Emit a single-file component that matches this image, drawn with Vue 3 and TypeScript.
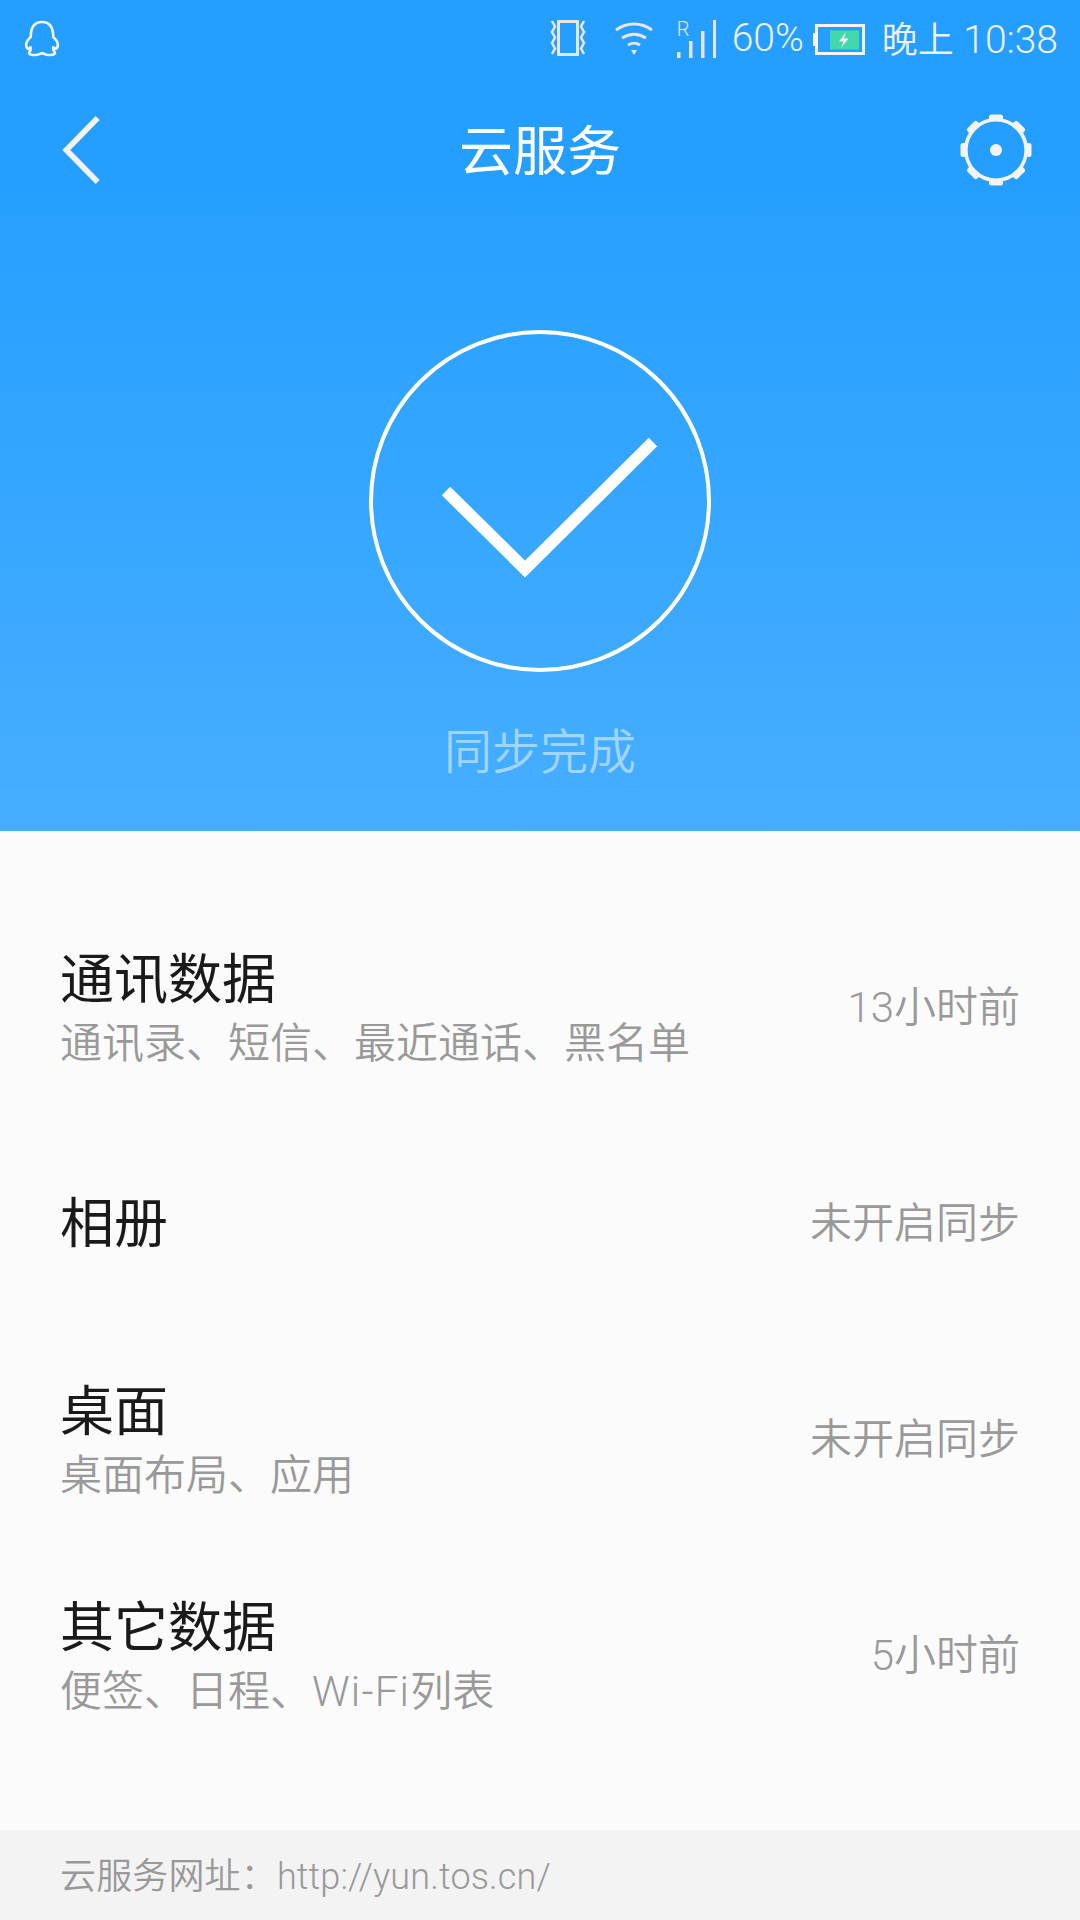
<script setup lang="ts">
interface SyncRow {
  title: string;
  detail?: string;
  // the latin word in a detail line runs wider than the rest, so it gets its own span
  latin?: string;
  tail?: string;
  status: string;
}

const rows: SyncRow[] = [
  { title: "通讯数据", detail: "通讯录、短信、最近通话、黑名单", status: "13小时前" },
  { title: "相册", status: "未开启同步" },
  { title: "桌面", detail: "桌面布局、应用", status: "未开启同步" },
  { title: "其它数据", detail: "便签、日程、", latin: "Wi-Fi", tail: "列表", status: "5小时前" },
];

const gearTeeth = [0, 45, 90, 135, 180, 225, 270, 315];
</script>

<template>
  <div class="screen">
    <header class="hero">
      <div class="status-bar">
        <svg class="qq" width="36" height="37" viewBox="72 54 108 112" fill="none" stroke="#f4f4f4" stroke-width="8">
          <path d="M92 105C92 75 105 60 126 60C147 60 160 75 160 105C168 113 175 120 174 130C173 142 165 145 160 134C160 142 158 146 164 150C170 160 150 161 140 159C133 158 128 154 126 154C124 154 119 158 112 159C102 161 82 160 88 150C94 146 92 142 92 134C87 145 79 142 78 130C77 120 84 113 92 105Z" />
        </svg>
        <div class="status-right">
          <svg width="38" height="36" viewBox="0 0 38 36" fill="none" stroke="#e6e6e6">
            <rect x="9.5" y="1.5" width="19" height="33" stroke-width="3" />
            <path d="M3 1l3 5.500-3 5.500 3 5.500-3 5.500 3 5.500-3 5.500M35 1l-3 5.500 3 5.500-3 5.500 3 5.500-3 5.500 3 5.500" stroke-width="2.500" />
          </svg>
          <svg class="wifi" width="38" height="33" viewBox="0 0 38 33" fill="none" stroke="#e6e6e6" stroke-width="2.800">
            <path d="M1 8c11-8 25-8 36 0M7 16c8-5 16-5 24 0M13 23c4-2.500 8-2.500 12 0" />
            <path d="M16 28h6l-3 5z" fill="#e6e6e6" stroke="none" />
          </svg>
          <div class="signal">
            <span class="roaming">R</span>
            <svg class="bars" width="39" height="38" viewBox="0 0 39 38" fill="#e6e6e6">
              <rect x="0" y="32" width="3.500" height="6" />
              <rect x="12" y="21" width="3.500" height="17" />
              <rect x="24" y="11" width="3.500" height="27" />
              <rect x="36" y="0" width="3" height="38" />
            </svg>
          </div>
          <span class="status-text pct">60%</span>
          <svg class="battery" width="52" height="31" viewBox="0 0 52 31">
            <rect x="0" y="9" width="3" height="13" fill="#f4f4f4" />
            <rect x="3.500" y="1.500" width="47" height="28" fill="none" stroke="#f4f4f4" stroke-width="3" />
            <rect x="17" y="6.500" width="29" height="19" fill="#41d9ac" />
            <path d="M33 8l-7 9.500h4.500l-2.500 6.500 7.500-9.500h-4.500z" fill="#f4f4f4" />
          </svg>
          <span class="status-text time"><span class="time-cjk">晚上</span> 10:38</span>
        </div>
      </div>

      <nav class="title-bar">
        <button class="icon-btn back" type="button" aria-label="返回">
          <svg width="40" height="68" viewBox="0 0 40 68" fill="none" stroke="#f2f2f2" stroke-width="5.700">
            <path d="M37.700 2L6.300 34l31.400 32" />
          </svg>
        </button>
        <h1 class="page-title">云服务</h1>
        <button class="icon-btn gear" type="button" aria-label="设置">
          <svg width="72" height="72" viewBox="0 0 72 72">
            <circle cx="36" cy="36" r="30.200" fill="none" stroke="#f4f4f4" stroke-width="3.600" />
            <rect
              v-for="angle in gearTeeth"
              :key="angle"
              x="29"
              y="0.500"
              width="14"
              height="6"
              rx="2.500"
              fill="#f4f4f4"
              :transform="`rotate(${angle} 36 36)`"
            />
            <circle cx="36" cy="36" r="6" fill="#f4f4f4" />
          </svg>
        </button>
      </nav>

      <div class="sync-state">
        <svg class="check" width="342" height="342" viewBox="0 0 342 342" fill="none" stroke="#fff">
          <circle cx="171" cy="171" r="169" stroke-width="4" />
          <path d="M77 161l79 78 128-127" stroke-width="12" />
        </svg>
        <p class="sync-label">同步完成</p>
      </div>
    </header>

    <main class="list">
      <section v-for="row in rows" :key="row.title" class="row">
        <div class="row-text">
          <h2 class="row-title">{{ row.title }}</h2>
          <p v-if="row.detail" class="row-detail">{{ row.detail }}<span v-if="row.latin" class="latin">{{ row.latin }}</span>{{ row.tail }}</p>
        </div>
        <span class="row-status">{{ row.status }}</span>
      </section>
    </main>

    <footer class="footer">云服务网址：http://yun.tos.cn/</footer>
  </div>
</template>

<style>
html,
body {
  margin: 0;
  background: #fbfbfb;
}
</style>

<style scoped>
.screen {
  width: 1080px;
  height: 1920px;
  display: flex;
  flex-direction: column;
  overflow: hidden;
  font-family: Roboto, "Noto Sans CJK SC", sans-serif;
  font-weight: 350;
  background: #fbfbfb;
}

.hero {
  height: 831px;
  flex: none;
  display: flex;
  flex-direction: column;
  background: linear-gradient(180deg, #259fff 0%, #259fff 22%, #47aeff 100%);
}

.status-bar {
  height: 76px;
  display: flex;
  align-items: center;
  justify-content: space-between;
  padding: 0 22px 0 24px;
}

.status-right {
  display: flex;
  align-items: center;
}

.wifi {
  margin-left: 28px;
}

.signal {
  position: relative;
  margin-left: 24px;
  height: 38px;
  margin-top: 2px;
}

.bars {
  display: block;
}

.roaming {
  position: absolute;
  left: 0;
  top: -1px;
  font-size: 20px;
  line-height: 20px;
  color: #e6e6e6;
}

.status-text {
  font-size: 39px;
  color: #f0f0f0;
}

.time-cjk {
  font-size: 36px;
}

.pct {
  margin-left: 16px;
}

.battery {
  margin-left: 9px;
  margin-top: 2px;
}

.time {
  margin-left: 17px;
  padding-bottom: 2px;
}

.title-bar {
  height: 148px;
  display: flex;
  align-items: center;
  justify-content: space-between;
  padding: 0 48px 0 60px;
  position: relative;
}

.icon-btn {
  padding: 0;
  border: none;
  background: none;
  display: flex;
}

.page-title {
  position: absolute;
  left: 0;
  right: 0;
  margin: 0;
  padding-bottom: 5px;
  text-align: center;
  font-size: 54px;
  font-weight: 400;
  color: #fff;
}

.sync-state {
  display: flex;
  flex-direction: column;
  align-items: center;
  padding-top: 106px;
}

.check {
  display: block;
}

.sync-label {
  margin: 50px 0 0;
  font-size: 48px;
  line-height: 62px;
  color: rgba(255, 255, 255, 0.5);
}

.list {
  flex: 1;
  display: flex;
  flex-direction: column;
  padding-top: 68px;
}

.row {
  height: 216px;
  display: flex;
  align-items: center;
  justify-content: space-between;
  padding: 0 60px;
}

.row-text {
  padding-top: 2px;
}

.row-title {
  margin: 0;
  font-size: 54px;
  line-height: 70px;
  font-weight: 400;
  color: #1a1a1a;
}

.row-title:only-child {
  margin-top: 2px;
}

.row-detail {
  margin: 2px 0 0;
  font-size: 42px;
  line-height: 52px;
  color: #999;
}

.latin {
  letter-spacing: 1.200px;
}

.row-status {
  font-size: 42px;
  color: #999;
  padding-bottom: 8px;
}

.footer {
  height: 90px;
  flex: none;
  display: flex;
  align-items: center;
  padding: 0 0 4px 60px;
  box-sizing: border-box;
  background: #f3f3f3;
  font-size: 36px;
  letter-spacing: 0.150px;
  color: #999;
}
</style>
